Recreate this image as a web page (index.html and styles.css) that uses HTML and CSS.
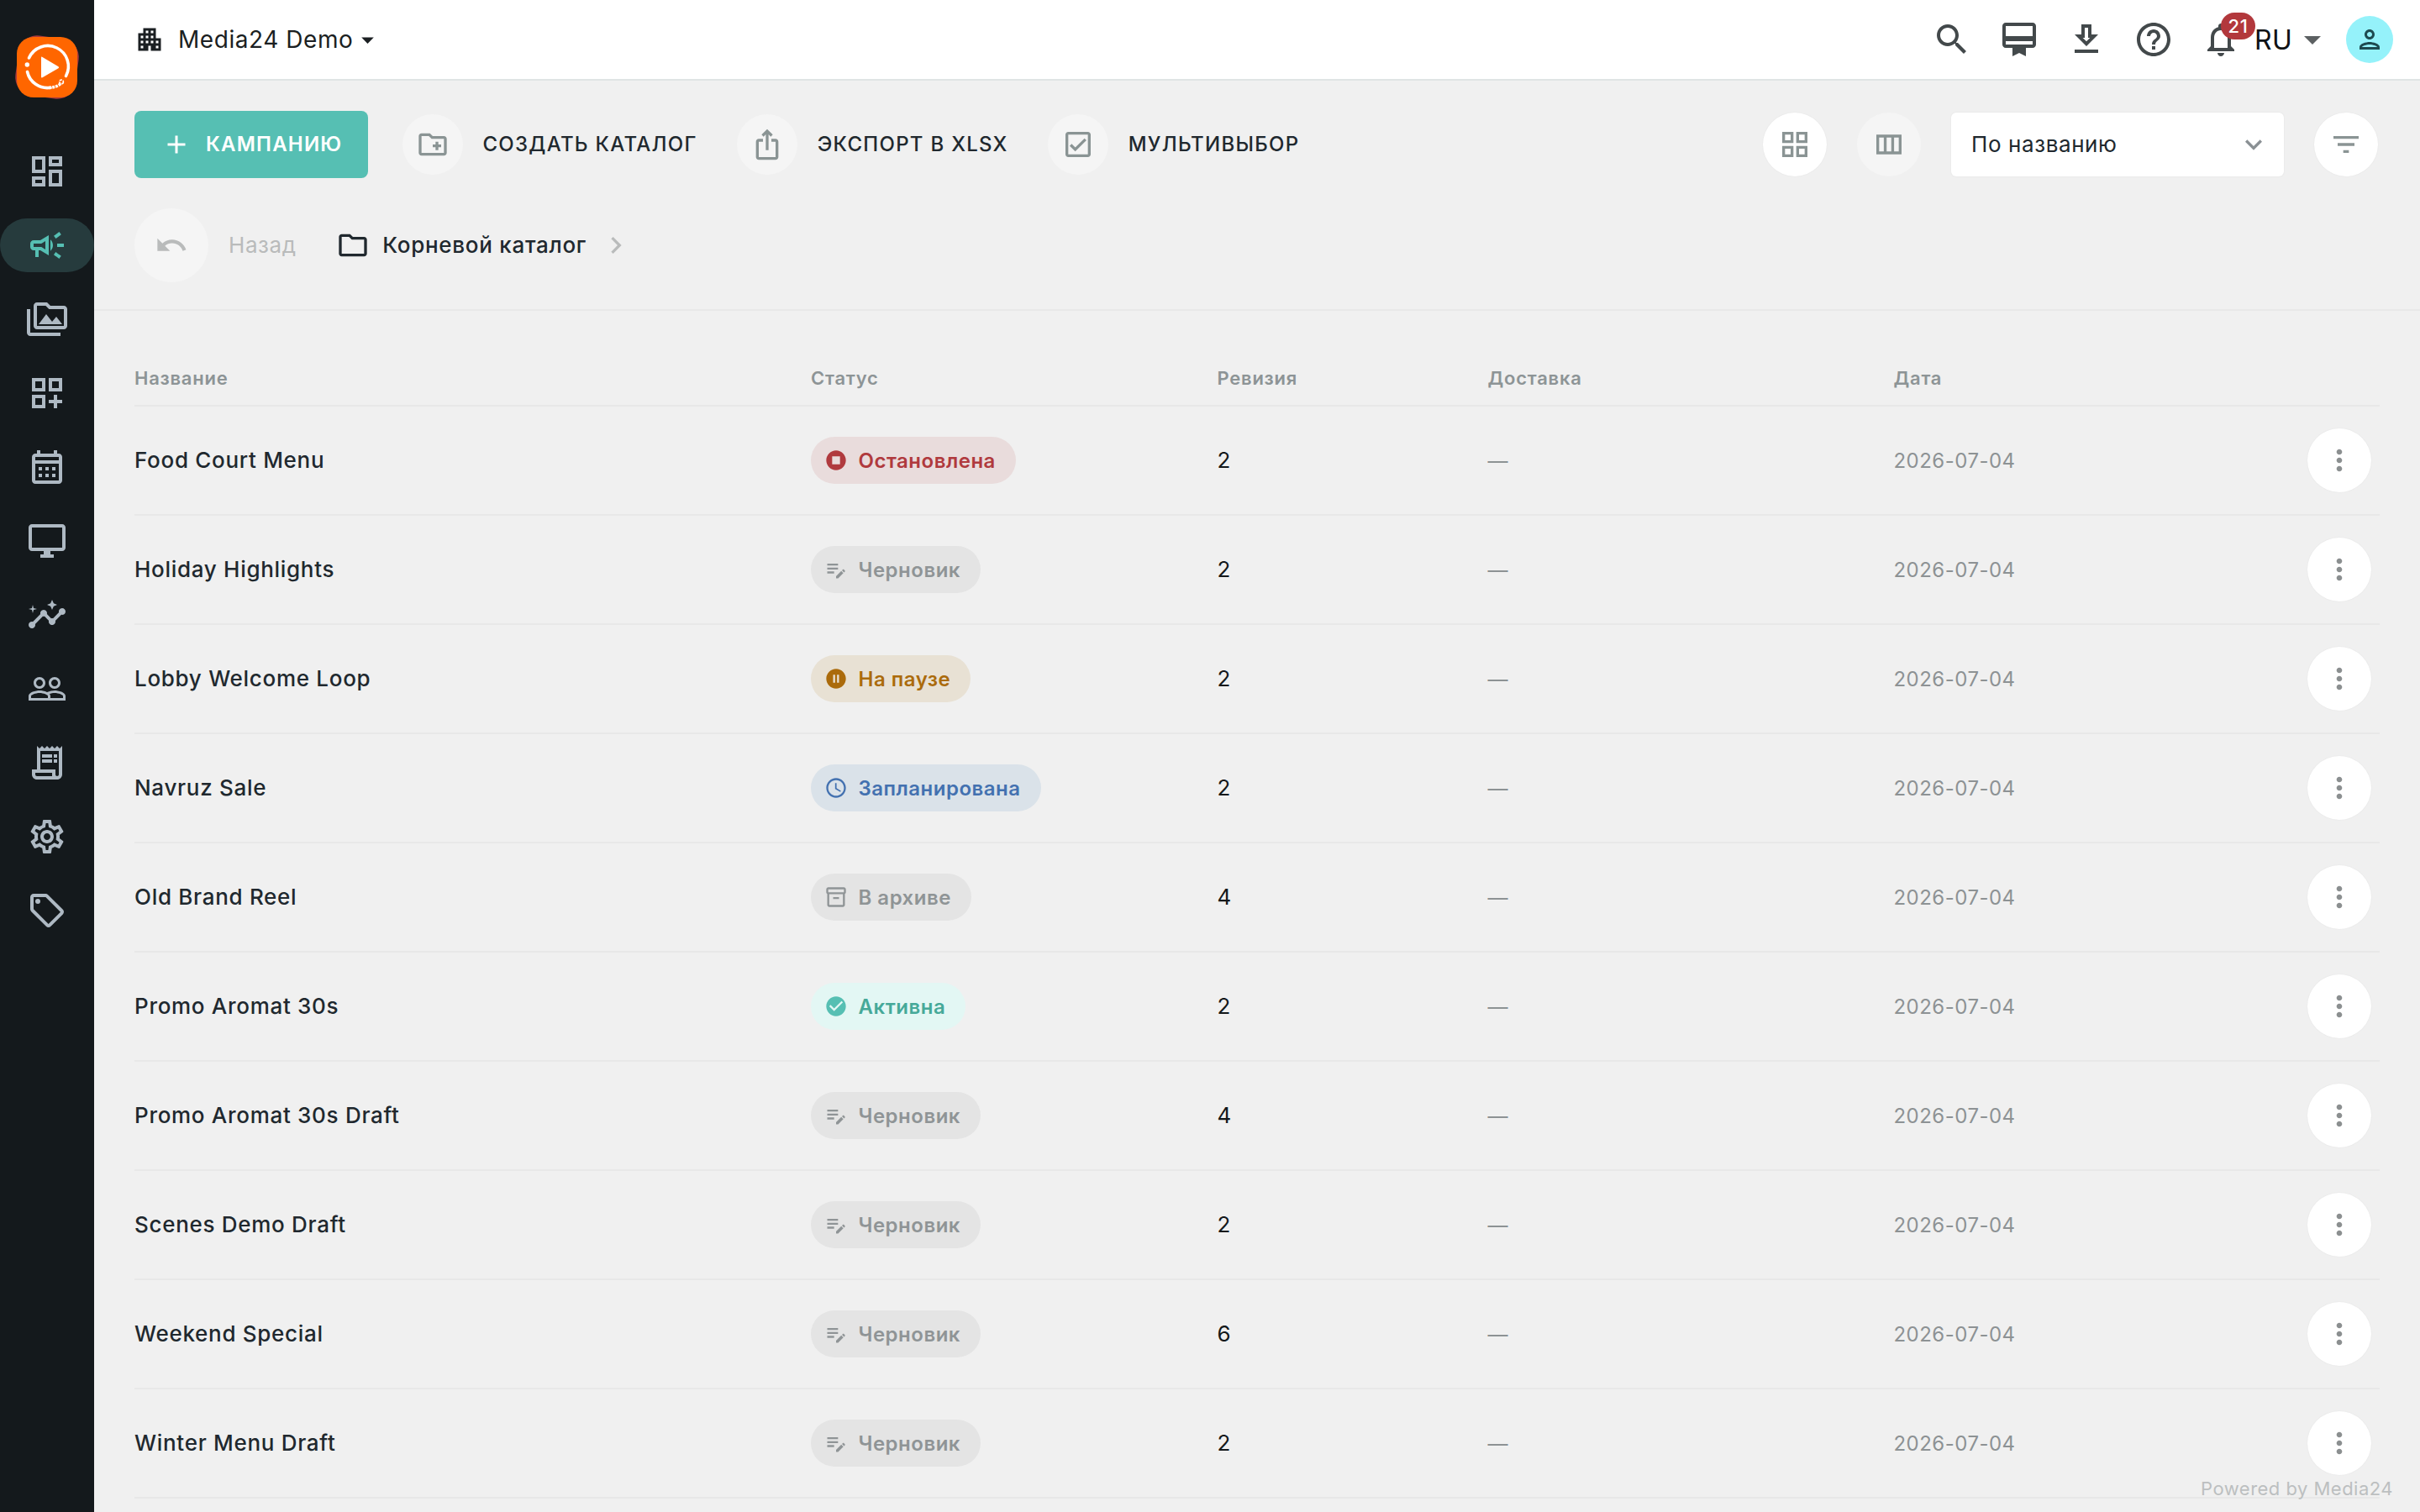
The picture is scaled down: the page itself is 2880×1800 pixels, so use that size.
FILE: index.html
```html
<!DOCTYPE html>
<html lang="ru">
<head>
<meta charset="utf-8">
<title>Media24 Demo</title>
<link rel="stylesheet" href="styles.css">
</head>
<body>
<svg class="sprite" aria-hidden="true">
  <symbol id="i-more" viewBox="0 0 24 24"><path d="M12 8c1.1 0 2-.9 2-2s-.9-2-2-2-2 .9-2 2 .9 2 2 2zm0 2c-1.100 0-2 .9-2 2s.9 2 2 2 2-.9 2-2-.9-2-2-2zm0 6c-1.100 0-2 .9-2 2s.9 2 2 2 2-.9 2-2-.9-2-2-2z"/></symbol>
  <symbol id="i-draft" viewBox="0 0 24 24"><path d="M3 10h11v2H3v-2zm0-2h11V6H3v2zm0 8h7v-2H3v2zm15.010-3.130.71-.71c.39-.39 1.020-.39 1.410 0l.71.71c.39.39.39 1.020 0 1.410l-.71.71-2.120-2.120zm-.71.71-5.300 5.300V21h2.120l5.300-5.300-2.120-2.120z"/></symbol>
  <symbol id="i-stop" viewBox="0 0 24 24"><path d="M12 2C6.480 2 2 6.480 2 12s4.480 10 10 10 10-4.480 10-10S17.520 2 12 2zm4 14H8V8h8v8z"/></symbol>
  <symbol id="i-pause" viewBox="0 0 24 24"><path d="M12 2C6.480 2 2 6.480 2 12s4.480 10 10 10 10-4.480 10-10S17.520 2 12 2zm-1 14H9V8h2v8zm4 0h-2V8h2v8z"/></symbol>
  <symbol id="i-clock" viewBox="0 0 24 24"><path d="M11.990 2C6.470 2 2 6.480 2 12s4.470 10 9.990 10C17.520 22 22 17.520 22 12S17.520 2 11.990 2zM12 20c-4.420 0-8-3.580-8-8s3.580-8 8-8 8 3.580 8 8-3.580 8-8 8zm.5-13H11v6l5.250 3.150.75-1.230-4.500-2.670z"/></symbol>
  <symbol id="i-archive" viewBox="0 0 24 24"><path d="M20 2H4c-1 0-2 .9-2 2v3.010c0 .72.43 1.340 1 1.690V20c0 1.100 1.100 2 2 2h14c.9 0 2-.9 2-2V8.700c.57-.35 1-.97 1-1.690V4c0-1.100-1-2-2-2zm-1 18H5V9h14v11zm1-13H4V4h16v3zM9 12h6v2H9z"/></symbol>
  <symbol id="i-check" viewBox="0 0 24 24"><path d="M12 2C6.480 2 2 6.480 2 12s4.480 10 10 10 10-4.480 10-10S17.520 2 12 2zm-2 15l-5-5 1.410-1.410L10 14.170l7.590-7.590L19 8l-9 9z"/></symbol>
</svg>
<div class="app">
  <aside class="sidebar">
    <svg class="logo" viewBox="0 0 80 80">
      <rect class="logo-shade" x="4" y="4" width="72" height="72" rx="22" transform="rotate(8 40 40)"/>
      <rect class="logo-tile" x="4" y="4" width="72" height="72" rx="20"/>
      <path class="logo-ring" d="M18.500 29A24.500 24.500 0 1 1 62.500 50.500M16.500 45.500A24.500 24.500 0 0 0 44 64.300"/>
      <circle class="logo-mark" cx="16.300" cy="37" r="2.700"/>
      <path class="logo-mark" d="M33 28.500v23q0 1.500 1.500.8l19-11q1.300-1 0-2l-19-11.400q-1.500-.8-1.500.6z"/>
      <path class="logo-dash" d="M42 64.500q10-.5 15-5.500"/>
      <circle class="logo-eye" cx="57" cy="57.500" r="2.400"/>
    </svg>
    <nav class="menu">
      <a class="menu-item"><svg viewBox="0 0 24 24"><path d="M19 5v2h-4V5h4M9 5v6H5V5h4m10 8v6h-4v-6h4M9 17v2H5v-2h4M21 3h-8v6h8V3zM11 3H3v10h8V3zm10 8h-8v10h8V11zm-10 4H3v6h8v-6z"/></svg></a>
      <a class="menu-item active"><svg viewBox="0 0 24 24"><path d="M18 11v2h4v-2h-4zm-2 6.610c.96.71 2.210 1.650 3.200 2.390.4-.53.8-1.070 1.200-1.600-.99-.74-2.240-1.680-3.200-2.400-.4.54-.8 1.080-1.200 1.610zM20.400 5.600c-.4-.53-.8-1.070-1.200-1.600-.99.74-2.240 1.680-3.200 2.400.4.53.8 1.070 1.200 1.600.96-.72 2.210-1.650 3.200-2.400zM4 9c-1.100 0-2 .9-2 2v2c0 1.100.9 2 2 2h1v4h2v-4h1l5 3V6L8 9H4zm5.030 1.710L11 9.530v4.940l-1.970-1.180-.48-.29H4v-2h4.550l.48-.29zM15.500 12c0-1.330-.58-2.530-1.500-3.350v6.690c.92-.81 1.500-2.010 1.500-3.340z"/></svg></a>
      <a class="menu-item"><svg viewBox="0 0 24 24"><path d="M2 6H0v14c0 1.100.9 2 2 2h18v-2H2V6zm5 9h14l-3.500-4.500-2.500 3.010L11.500 9zM22 4h-8l-2-2H6c-1.100 0-1.990.9-1.990 2L4 16c0 1.100.9 2 2 2h16c1.100 0 2-.9 2-2V6c0-1.100-.9-2-2-2zm0 12H6V4h5.170l2 2H22v10z"/></svg></a>
      <a class="menu-item"><svg viewBox="0 0 24 24"><path d="M3 11h8V3H3v8zm2-6h4v4H5V5zm8-2v8h8V3h-8zm6 6h-4V5h4v4zM3 21h8v-8H3v8zm2-6h4v4H5v-4zm13-2h-2v3h-3v2h3v3h2v-3h3v-2h-3v-3z"/></svg></a>
      <a class="menu-item"><svg viewBox="0 0 24 24"><path d="M19 4h-1V2h-2v2H8V2H6v2H5c-1.110 0-1.990.9-1.990 2L3 20c0 1.100.89 2 2 2h14c1.100 0 2-.9 2-2V6c0-1.100-.9-2-2-2zm0 16H5V10h14v10zm0-12H5V6h14v2zM9 14H7v-2h2v2zm4 0h-2v-2h2v2zm4 0h-2v-2h2v2zm-8 4H7v-2h2v2zm4 0h-2v-2h2v2zm4 0h-2v-2h2v2z"/></svg></a>
      <a class="menu-item"><svg viewBox="0 0 24 24"><path d="M21 2H3c-1.100 0-2 .9-2 2v12c0 1.100.9 2 2 2h7v2H8v2h8v-2h-2v-2h7c1.100 0 2-.9 2-2V4c0-1.100-.9-2-2-2zm0 14H3V4h18v12z"/></svg></a>
      <a class="menu-item"><svg viewBox="0 0 24 24"><path d="M21 8c-1.450 0-2.260 1.440-1.930 2.510l-3.550 3.560c-.3-.09-.74-.09-1.040 0l-2.550-2.550C12.270 10.450 11.460 9 10 9c-1.450 0-2.270 1.440-1.930 2.520l-4.560 4.550C2.440 15.740 1 16.550 1 18c0 1.100.9 2 2 2 1.450 0 2.260-1.440 1.930-2.510l4.550-4.560c.3.09.74.09 1.040 0l2.550 2.550C12.730 16.550 13.540 18 15 18c1.450 0 2.270-1.440 1.930-2.520l3.560-3.550C21.560 12.260 23 11.450 23 10c0-1.100-.9-2-2-2zM15 9l.94-2.070L18 6l-2.060-.93L15 3l-.92 2.070L12 6l2.080.93zM3.500 11L4 9l2-.5L4 8l-.5-2L3 8l-2 .5L3 9z"/></svg></a>
      <a class="menu-item"><svg viewBox="0 0 24 24"><path d="M16.500 13c-1.200 0-3.070.34-4.500 1-1.430-.67-3.300-1-4.500-1C5.330 13 1 14.080 1 16.250V19h22v-2.750c0-2.170-4.330-3.250-6.500-3.250zm-4 4.500h-10v-1.250c0-.54 2.560-1.750 5-1.750s5 1.210 5 1.750v1.250zm9 0H14v-1.250c0-.46-.2-.86-.52-1.220.88-.3 1.960-.53 3.020-.53 2.440 0 5 1.210 5 1.750v1.250zM7.500 12c1.930 0 3.500-1.570 3.500-3.500S9.430 5 7.500 5 4 6.570 4 8.500 5.570 12 7.500 12zm0-5.500c1.100 0 2 .9 2 2s-.9 2-2 2-2-.9-2-2 .9-2 2-2zm9 5.500c1.930 0 3.500-1.570 3.500-3.500S18.430 5 16.500 5 13 6.570 13 8.500s1.570 3.500 3.500 3.500zm0-5.500c1.100 0 2 .9 2 2s-.9 2-2 2-2-.9-2-2 .9-2 2-2z"/></svg></a>
      <a class="menu-item"><svg viewBox="0 0 24 24"><path d="M19.500 3.500L18 2l-1.500 1.500L15 2l-1.500 1.500L12 2l-1.500 1.500L9 2 7.500 3.500 6 2v14H3v3c0 1.660 1.340 3 3 3h12c1.660 0 3-1.340 3-3V2l-1.500 1.500zM15 20H6c-.55 0-1-.45-1-1v-1h10v2zm4-1c0 .55-.45 1-1 1s-1-.45-1-1v-3H8V5h11v14zM9 7h6v2H9zM16 7h2v2h-2zM9 10h6v2H9zM16 10h2v2h-2z"/></svg></a>
      <a class="menu-item"><svg viewBox="0 0 24 24"><path d="M19.430 12.980c.04-.32.07-.64.07-.98 0-.34-.03-.66-.07-.98l2.110-1.650c.19-.15.24-.42.12-.64l-2-3.460c-.09-.16-.26-.25-.44-.25-.06 0-.12.01-.17.03l-2.490 1c-.52-.4-1.080-.73-1.690-.98l-.38-2.650C14.460 2.180 14.250 2 14 2h-4c-.25 0-.46.18-.49.42l-.38 2.650c-.61.25-1.170.59-1.690.98l-2.490-1c-.06-.02-.12-.03-.18-.03-.17 0-.34.09-.43.25l-2 3.460c-.13.22-.07.49.12.64l2.110 1.650c-.04.32-.07.65-.07.98 0 .33.03.66.07.98l-2.110 1.650c-.19.15-.24.42-.12.64l2 3.460c.09.16.26.25.44.25.06 0 .12-.01.17-.03l2.490-1c.52.4 1.080.73 1.690.98l.38 2.650c.03.24.24.42.49.42h4c.25 0 .46-.18.49-.42l.38-2.650c.61-.25 1.170-.59 1.690-.98l2.490 1c.06.02.12.03.18.03.17 0 .34-.09.43-.25l2-3.460c.12-.22.07-.49-.12-.64l-2.110-1.650zm-1.980-1.710c.04.31.05.52.05.73 0 .21-.02.43-.05.73l-.14 1.130.89.7 1.080.84-.7 1.210-1.270-.51-1.040-.42-.9.68c-.43.32-.84.56-1.250.73l-1.060.43-.16 1.130-.2 1.350h-1.400l-.19-1.350-.16-1.130-1.060-.43c-.43-.18-.83-.41-1.230-.71l-.91-.7-1.060.43-1.270.51-.7-1.210 1.080-.84.89-.7-.14-1.130c-.03-.31-.05-.54-.05-.74s.02-.43.05-.73l.14-1.130-.89-.7-1.080-.84.7-1.210 1.270.51 1.040.42.9-.68c.43-.32.84-.56 1.250-.73l1.060-.43.16-1.130.2-1.350h1.390l.19 1.350.16 1.130 1.060.43c.43.18.83.41 1.230.71l.91.7 1.060-.43 1.270-.51.7 1.210-1.070.85-.89.7.14 1.130zM12 8c-2.210 0-4 1.790-4 4s1.790 4 4 4 4-1.790 4-4-1.790-4-4-4zm0 6c-1.100 0-2-.9-2-2s.9-2 2-2 2 .9 2 2-.9 2-2 2z"/></svg></a>
      <a class="menu-item"><svg viewBox="0 0 24 24"><path d="M21.410 11.410l-8.830-8.830c-.37-.37-.88-.58-1.410-.58H4c-1.100 0-2 .9-2 2v7.170c0 .53.21 1.040.59 1.410l8.830 8.830c.78.78 2.050.78 2.830 0l7.170-7.170c.78-.78.78-2.040-.01-2.830zM12.830 20L4 11.170V4h7.170L20 12.830 12.830 20z"/><circle cx="6.500" cy="6.500" r="1.500"/></svg></a>
    </nav>
  </aside>

  <div class="page">
    <header class="topbar">
      <div class="org">
        <svg class="org-icon" viewBox="0 0 24 24"><path d="M17 11V3H7v4H3v14h8v-4h2v4h8V11h-4zM7 19H5v-2h2v2zm0-4H5v-2h2v2zm0-4H5V9h2v2zm4 4H9v-2h2v2zm0-4H9V9h2v2zm0-4H9V5h2v2zm4 8h-2v-2h2v2zm0-4h-2V9h2v2zm0-4h-2V5h2v2zm4 12h-2v-2h2v2zm0-4h-2v-2h2v2z"/></svg>
        <span class="org-name">Media24 Demo</span>
        <svg class="org-caret" viewBox="0 0 24 24"><path d="M7 10l5 5 5-5z"/></svg>
      </div>
      <div class="tools">
        <svg viewBox="0 0 24 24"><path d="M15.500 14h-.79l-.28-.27C15.410 12.590 16 11.110 16 9.500 16 5.910 13.090 3 9.500 3S3 5.910 3 9.500 5.910 16 9.500 16c1.610 0 3.090-.59 4.230-1.570l.27.28v.79l5 4.990L20.490 19l-4.990-5zm-6 0C7.010 14 5 11.990 5 9.500S7.010 5 9.500 5 14 7.010 14 9.500 11.990 14 9.500 14z"/></svg>
        <svg viewBox="0 0 24 24"><path d="M20 2H4c-1.110 0-2 .89-2 2v11c0 1.110.89 2 2 2h4v5l4-2 4 2v-5h4c1.110 0 2-.89 2-2V4c0-1.110-.89-2-2-2zm0 13H4v-2h16v2zm0-5H4V4h16v6z"/></svg>
        <svg viewBox="0 0 24 24"><path d="M19 9h-4V3H9v6H5l7 7 7-7zm-8 2V5h2v6h1.170L12 13.170 9.830 11H11zm-6 7h14v2H5z"/></svg>
        <svg viewBox="0 0 24 24"><path d="M11 18h2v-2h-2v2zm1-16C6.480 2 2 6.480 2 12s4.480 10 10 10 10-4.480 10-10S17.520 2 12 2zm0 18c-4.410 0-8-3.590-8-8s3.590-8 8-8 8 3.590 8 8-3.590 8-8 8zm0-14c-2.210 0-4 1.790-4 4h2c0-1.100.9-2 2-2s2 .9 2 2c0 2-3 1.750-3 5h2c0-2.250 3-2.500 3-5 0-2.210-1.790-4-4-4z"/></svg>
        <div class="bell">
          <svg viewBox="0 0 24 24"><path d="M12 22c1.100 0 2-.9 2-2h-4c0 1.100.9 2 2 2zm6-6v-5c0-3.070-1.630-5.640-4.500-6.320V4c0-.83-.67-1.500-1.500-1.500s-1.500.67-1.500 1.500v.68C7.640 5.360 6 7.920 6 11v5l-2 2v1h16v-1l-2-2zm-2 1H8v-6c0-2.480 1.510-4.500 4-4.500s4 2.020 4 4.500v6z"/></svg>
          <span class="badge">21</span>
        </div>
      </div>
      <div class="lang"><span>RU</span><svg viewBox="0 0 24 24"><path d="M7 10l5 5 5-5z"/></svg></div>
      <div class="avatar"><svg viewBox="0 0 24 24"><path d="M12 6c1.100 0 2 .9 2 2s-.9 2-2 2-2-.9-2-2 .9-2 2-2m0 10c2.700 0 5.800 1.290 6 2H6c.23-.72 3.310-2 6-2m0-12C9.790 4 8 5.790 8 8s1.790 4 4 4 4-1.790 4-4-1.790-4-4-4zm0 10c-2.670 0-8 1.340-8 4v2h16v-2c0-2.660-5.330-4-8-4z"/></svg></div>
    </header>

    <section class="toolbar">
      <div class="actions">
        <button class="primary"><svg viewBox="0 0 24 24"><path d="M19 13h-6v6h-2v-6H5v-2h6V5h2v6h6v2z"/></svg><span class="label">КАМПАНИЮ</span></button>
        <div class="action"><span class="round ghost small"><svg viewBox="0 0 24 24"><path d="M20 6h-8l-2-2H4c-1.110 0-1.990.89-1.990 2L2 18c0 1.110.89 2 2 2h16c1.110 0 2-.89 2-2V8c0-1.110-.89-2-2-2zm0 12H4V6h5.170l2 2H20v10zm-8-4h2v2h2v-2h2v-2h-2v-2h-2v2h-2z"/></svg></span><span class="label">СОЗДАТЬ КАТАЛОГ</span></div>
        <div class="action"><span class="round ghost small"><svg viewBox="0 0 24 24"><path d="M16 5l-1.420 1.420-1.590-1.590V16h-1.980V4.830L9.420 6.420 8 5l4-4 4 4zm4 5v11c0 1.100-.9 2-2 2H6c-1.110 0-2-.9-2-2V10c0-1.110.89-2 2-2h3v2H6v11h12V10h-3V8h3c1.100 0 2 .89 2 2z"/></svg></span><span class="label">ЭКСПОРТ В XLSX</span></div>
        <div class="action"><span class="round ghost small"><svg viewBox="0 0 24 24"><path d="M19 3H5c-1.100 0-2 .9-2 2v14c0 1.100.9 2 2 2h14c1.100 0 2-.9 2-2V5c0-1.100-.9-2-2-2zm0 16H5V5h14v14zM17.990 9l-1.410-1.420-6.590 6.590-2.580-2.570-1.420 1.410 4 3.990z"/></svg></span><span class="label">МУЛЬТИВЫБОР</span></div>
      </div>
      <div class="view">
        <span class="round"><svg viewBox="0 0 24 24"><path d="M3 3v8h8V3H3zm6 6H5V5h4v4zm-6 4v8h8v-8H3zm6 6H5v-4h4v4zm4-16v8h8V3h-8zm6 6h-4V5h4v4zm-6 4v8h8v-8h-8zm6 6h-4v-4h4v4z"/></svg></span>
        <span class="round ghost"><svg viewBox="0 0 24 24"><path d="M3 5v14h18V5H3zm5.330 12H5V7h3.330v10zm5.340 0h-3.330V7h3.330v10zM19 17h-3.330V7H19v10z"/></svg></span>
        <div class="select"><span class="label">По названию</span><svg viewBox="0 0 24 24"><path d="M16.590 8.590L12 13.170 7.410 8.590 6 10l6 6 6-6z"/></svg></div>
        <span class="round"><svg viewBox="0 0 24 24"><path d="M10 18h4v-2h-4v2zM3 6v2h18V6H3zm3 7h12v-2H6v2z"/></svg></span>
      </div>
      <div class="crumbs">
        <span class="round ghost large"><svg viewBox="0 0 24 24"><path d="M12.500 8c-2.650 0-5.050.99-6.900 2.600L2 7v9h9l-3.620-3.620c1.390-1.160 3.160-1.880 5.120-1.880 3.540 0 6.550 2.310 7.600 5.500l2.370-.78C21.080 11.030 17.150 8 12.500 8z"/></svg></span>
        <span class="back label">Назад</span>
        <span class="folder"><svg viewBox="0 0 24 24"><path d="M9.170 6l2 2H20v10H4V6h5.170M10 4H4c-1.100 0-1.990.9-1.990 2L2 18c0 1.100.9 2 2 2h16c1.100 0 2-.9 2-2V8c0-1.100-.9-2-2-2h-8l-2-2z"/></svg><span class="label">Корневой каталог</span></span>
        <svg class="crumb-next" viewBox="0 0 24 24"><path d="M10 6L8.590 7.410 13.170 12l-4.580 4.590L10 18l6-6z"/></svg>
      </div>
    </section>

    <main class="table">
      <div class="row head"><span>Название</span><span>Статус</span><span>Ревизия</span><span>Доставка</span><span>Дата</span></div>
      <div class="row"><span class="name">Food Court Menu</span><span><span class="chip stopped"><svg><use href="#i-stop"/></svg>Остановлена</span></span><span class="rev">2</span><span class="muted">—</span><span class="muted">2026-07-04</span><span class="round menu-btn"><svg><use href="#i-more"/></svg></span></div>
      <div class="row"><span class="name">Holiday Highlights</span><span><span class="chip"><svg><use href="#i-draft"/></svg>Черновик</span></span><span class="rev">2</span><span class="muted">—</span><span class="muted">2026-07-04</span><span class="round menu-btn"><svg><use href="#i-more"/></svg></span></div>
      <div class="row"><span class="name">Lobby Welcome Loop</span><span><span class="chip paused"><svg><use href="#i-pause"/></svg>На паузе</span></span><span class="rev">2</span><span class="muted">—</span><span class="muted">2026-07-04</span><span class="round menu-btn"><svg><use href="#i-more"/></svg></span></div>
      <div class="row"><span class="name">Navruz Sale</span><span><span class="chip planned"><svg><use href="#i-clock"/></svg>Запланирована</span></span><span class="rev">2</span><span class="muted">—</span><span class="muted">2026-07-04</span><span class="round menu-btn"><svg><use href="#i-more"/></svg></span></div>
      <div class="row"><span class="name">Old Brand Reel</span><span><span class="chip"><svg><use href="#i-archive"/></svg>В архиве</span></span><span class="rev">4</span><span class="muted">—</span><span class="muted">2026-07-04</span><span class="round menu-btn"><svg><use href="#i-more"/></svg></span></div>
      <div class="row"><span class="name">Promo Aromat 30s</span><span><span class="chip live"><svg><use href="#i-check"/></svg>Активна</span></span><span class="rev">2</span><span class="muted">—</span><span class="muted">2026-07-04</span><span class="round menu-btn"><svg><use href="#i-more"/></svg></span></div>
      <div class="row"><span class="name">Promo Aromat 30s Draft</span><span><span class="chip"><svg><use href="#i-draft"/></svg>Черновик</span></span><span class="rev">4</span><span class="muted">—</span><span class="muted">2026-07-04</span><span class="round menu-btn"><svg><use href="#i-more"/></svg></span></div>
      <div class="row"><span class="name">Scenes Demo Draft</span><span><span class="chip"><svg><use href="#i-draft"/></svg>Черновик</span></span><span class="rev">2</span><span class="muted">—</span><span class="muted">2026-07-04</span><span class="round menu-btn"><svg><use href="#i-more"/></svg></span></div>
      <div class="row"><span class="name">Weekend Special</span><span><span class="chip"><svg><use href="#i-draft"/></svg>Черновик</span></span><span class="rev">6</span><span class="muted">—</span><span class="muted">2026-07-04</span><span class="round menu-btn"><svg><use href="#i-more"/></svg></span></div>
      <div class="row"><span class="name">Winter Menu Draft</span><span><span class="chip"><svg><use href="#i-draft"/></svg>Черновик</span></span><span class="rev">2</span><span class="muted">—</span><span class="muted">2026-07-04</span><span class="round menu-btn"><svg><use href="#i-more"/></svg></span></div>
    </main>
    <footer class="powered">Powered by Media24</footer>
  </div>
</div>
</body>
</html>
```
FILE: styles.css
```css
* { box-sizing: border-box; }

body {
  margin: 0;
  background: #f0f0f0;
  color: #20282e;
  font-family: Inter, "Liberation Sans", sans-serif;
  font-size: 26px;
  letter-spacing: 0.6px;
  overflow: hidden;
}

svg { display: block; flex: none; fill: currentColor; }
.sprite { width: 0; height: 0; position: absolute; }

.app { display: flex; height: 1800px; }

/* Sidebar */
.sidebar {
  width: 112px;
  flex: none;
  background: #14191c;
  padding-top: 40px;
  display: flex;
  flex-direction: column;
  align-items: center;
}
.logo { width: 80px; height: 80px; overflow: visible; }
.logo-shade { fill: #a83a3c; }
.logo-tile { fill: #ff6600; }
.logo-ring { fill: none; stroke: #fff; stroke-width: 3.6; stroke-linecap: round; }
.logo-mark { fill: #fff; }
.logo-dash { fill: none; stroke: #fff; stroke-width: 3.4; stroke-dasharray: 3 1; }
.logo-eye { fill: none; stroke: #fff; stroke-width: 1.6; stroke-dasharray: 3 1; }
.menu { width: 100%; margin-top: 52px; display: flex; flex-direction: column; gap: 24px; }
.menu-item {
  height: 64px;
  border-radius: 32px;
  display: flex;
  align-items: center;
  justify-content: center;
  color: #aeb9c3;
}
.menu-item svg { width: 48px; height: 48px; }
.menu-item.active { background: #263b3d; color: #56bfb3; }

/* Top bar */
.page { flex: 1; min-width: 0; display: flex; flex-direction: column; }
.topbar {
  height: 96px;
  flex: none;
  background: #fff;
  border-bottom: 2px solid #e0e4e4;
  display: flex;
  align-items: center;
  padding: 0 32px 0 48px;
}
.org { display: flex; align-items: center; color: #1b1f22; }
.org-icon { width: 36px; height: 36px; margin-right: 16px; }
.org-name { font-size: 28px; letter-spacing: 0.56px; }
.org-caret { width: 35px; height: 35px; }
.tools { display: flex; gap: 32px; margin-left: auto; color: #43494b; }
.tools svg { width: 48px; height: 48px; }
.bell { position: relative; }
.badge {
  position: absolute;
  left: 24px;
  top: -8px;
  width: 41px;
  height: 32px;
  border-radius: 16px;
  background: #b2383c;
  color: #fff;
  font-size: 22px;
  font-weight: 500;
  line-height: 32px;
  text-align: center;
}
.lang { display: flex; align-items: center; margin-left: 16px; color: #101214; font-size: 32px; letter-spacing: 0.3px; }
.lang svg { width: 48px; height: 48px; color: #5c6062; }
.avatar {
  width: 56px;
  height: 56px;
  margin-left: 16px;
  border-radius: 50%;
  background: #95f2fa;
  color: #1e4a50;
  display: flex;
  align-items: center;
  justify-content: center;
}
.avatar svg { width: 36px; height: 36px; }

/* Toolbar */
.toolbar {
  height: 274px;
  flex: none;
  border-bottom: 2px solid #e8e8e8;
  padding: 36px 50px 0 48px;
  display: grid;
  grid-template-columns: auto auto;
  grid-template-rows: 80px 88px;
  row-gap: 36px;
  justify-content: space-between;
  align-items: center;
}
.actions, .action, .view, .crumbs, .folder { display: flex; align-items: center; }
.actions { gap: 47px; font-size: 24px; font-weight: 500; letter-spacing: 1.27px; }
.action { gap: 24px; }
.label { padding-bottom: 2px; }
.primary {
  width: 278px;
  height: 80px;
  margin-right: -6.5px;
  padding: 0 0 0 32px;
  border: 0;
  border-radius: 8px;
  background: #56bfb3;
  color: #fff;
  display: flex;
  align-items: center;
  gap: 17px;
  font: inherit;
  font-weight: 600;
  letter-spacing: 1.2px;
}
.primary svg { width: 36px; height: 36px; }
.round {
  width: 76px;
  height: 76px;
  flex: none;
  border-radius: 50%;
  background: #fff;
  color: #8a9494;
  box-shadow: 0 0 2px rgba(0, 0, 0, 0.06);
  display: flex;
  align-items: center;
  justify-content: center;
}
.round svg { width: 40px; height: 40px; }
.round.ghost { background: #f5f5f5; box-shadow: none; }
.round.small { width: 72px; height: 72px; }
.round.large { width: 88px; height: 88px; color: #b9bbbb; }
.view { gap: 36px; }
.select {
  width: 396px;
  height: 76px;
  border-radius: 6px;
  background: #fff;
  box-shadow: 0 0 2px rgba(0, 0, 0, 0.08);
  padding: 0 16px 0 24px;
  display: flex;
  align-items: center;
  justify-content: space-between;
}
.select svg { width: 40px; height: 40px; color: #8a9094; }
.crumbs { grid-column: 1 / -1; }
.crumbs svg { width: 40px; height: 40px; }
.back { margin: 0 47px 0 24px; color: #b9bbbb; }
.folder { gap: 15.5px; font-weight: 500; letter-spacing: 0.72px; }
.crumb-next { margin-left: 15px; color: #b9bbbb; }

/* Table */
.table { padding: 0 48px; }
.row {
  height: 130px;
  border-bottom: 2px solid #e8e8e8;
  display: grid;
  grid-template-columns: 805px 483.5px 322px 483px 1fr auto;
  align-items: center;
}
.row.head {
  height: 114px;
  padding-top: 48px;
  color: #8d9496;
  font-size: 22px;
  font-weight: 600;
  letter-spacing: 0.75px;
}
.name { font-weight: 500; letter-spacing: 0.7px; padding-bottom: 2px; }
.rev { color: #14181a; padding-bottom: 2px; }
.muted { color: #8d9294; font-size: 24px; letter-spacing: 0.48px; padding-top: 1px; }
.menu-btn { margin-right: 10px; color: #8b8f90; }
.chip {
  width: fit-content;
  height: 56px;
  border-radius: 28px;
  padding: 0 24px 0 16px;
  display: flex;
  align-items: center;
  gap: 12.5px;
  background: #e4e4e4;
  color: #8f9496;
  font-size: 24px;
  font-weight: 600;
  letter-spacing: 0.5px;
}
.chip svg { width: 28px; height: 28px; }
.stopped { background: #e9dcdc; color: #b03a3e; }
.paused { background: #e8e1d4; color: #ab6b0c; }
.planned { background: #dae2e9; color: #4371b0; }
.live { background: #e3f7f4; color: #46a999; }
.live svg { color: #56bfb3; }

.powered {
  position: absolute;
  right: 32px;
  bottom: 14px;
  color: #bcbfc0;
  font-size: 22px;
  letter-spacing: 0.48px;
  line-height: 28px;
}
```
